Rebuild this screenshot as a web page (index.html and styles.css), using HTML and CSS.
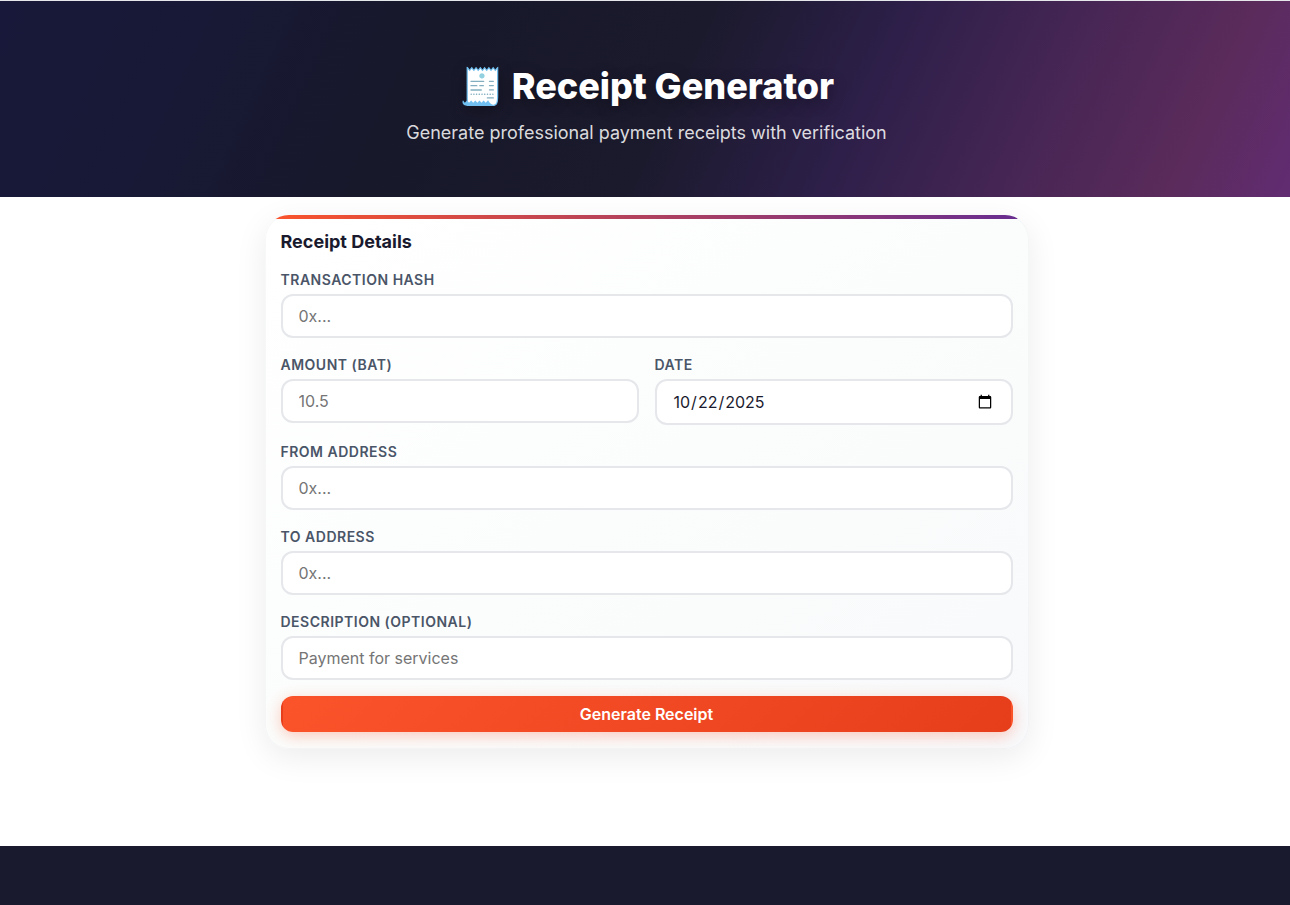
FILE: index.html
```html
<!DOCTYPE html>
<html lang="en">
<head>
<meta charset="utf-8">
<meta name="viewport" content="width=device-width, initial-scale=1">
<title>Receipt Generator</title>
<link rel="stylesheet" href="styles.css">
</head>
<body>
<header class="hero">
  <h1 class="hero-title">🧾 Receipt Generator</h1>
  <p class="hero-subtitle">Generate professional payment receipts with verification</p>
</header>
<main class="content">
  <form class="card">
    <h2 class="card-title">Receipt Details</h2>
    <div class="fields">
      <div class="field">
        <label class="label" for="hash">Transaction Hash</label>
        <input class="input" id="hash" type="text" placeholder="0x...">
      </div>
      <div class="row">
        <div class="field">
          <label class="label" for="amount">Amount (BAT)</label>
          <input class="input" id="amount" type="number" step="0.01" placeholder="10.5">
        </div>
        <div class="field">
          <label class="label" for="date">Date</label>
          <input class="input input-date" id="date" type="date" value="2025-10-22">
        </div>
      </div>
      <div class="field">
        <label class="label" for="from">From Address</label>
        <input class="input" id="from" type="text" placeholder="0x...">
      </div>
      <div class="field">
        <label class="label" for="to">To Address</label>
        <input class="input" id="to" type="text" placeholder="0x...">
      </div>
      <div class="field">
        <label class="label" for="description">Description (Optional)</label>
        <input class="input" id="description" type="text" placeholder="Payment for services">
      </div>
      <button class="button" type="button">Generate Receipt</button>
    </div>
  </form>
</main>
<footer class="footer"></footer>
</body>
</html>
```

FILE: styles.css
```css
* {
  box-sizing: border-box;
}

body {
  display: flex;
  flex-direction: column;
  min-height: 100vh;
  margin: 0;
  background: #fff;
  color: #1a1a2e;
  font-family: Inter, "Liberation Sans", sans-serif;
  font-size: 16px;
}

.hero {
  padding: 63px 16px 48px 19px;
  border-top: 1px solid #e5e7eb;
  background: linear-gradient(115deg, #18183a 0%, #181936 15%, #17182a 32%, #1b1a2d 52%, #2d1f49 66%, #482655 80%, #5a2b5b 91%, #622c72 100%);
  text-align: center;
}

.hero-title {
  margin: 0 0 9px;
  color: #fff;
  font-size: 36px;
  font-weight: 800;
  line-height: 44px;
  text-shadow: 0 4px 16px rgba(0, 0, 0, 0.3);
}

.hero-subtitle {
  margin: 0;
  color: rgba(255, 255, 255, 0.85);
  font-size: 18px;
  line-height: 32px;
}

.content {
  flex: 1;
  padding: 18px 16px 97px 19px;
}

.card {
  position: relative;
  max-width: 764px;
  margin: 0 auto;
  padding: 16px 16px 17px;
  overflow: hidden;
  border-radius: 24px;
  background: linear-gradient(145deg, #fff 0%, #fbfdfc 50%, #f8f9fb 100%);
  box-shadow:
    0 8px 32px rgba(0, 0, 0, 0.08),
    inset 0 0 0 1px rgba(229, 231, 235, 0.3);
}

.card::before {
  position: absolute;
  inset: 0 0 auto;
  height: 4px;
  background: linear-gradient(90deg, #fb542b, #662d91);
  content: "";
}

.card-title {
  margin: 0 0 17px;
  font-size: 18px;
  font-weight: 700;
  line-height: 21px;
}

.fields {
  display: flex;
  flex-direction: column;
  gap: 16px;
}

.row {
  display: grid;
  grid-template-columns: 1fr 1fr;
  align-items: start;
  gap: 16px;
}

.field {
  display: flex;
  flex-direction: column;
  gap: 4px;
}

.label {
  color: #4a5568;
  font-size: 14px;
  font-weight: 600;
  letter-spacing: 0.5px;
  line-height: 21px;
  text-transform: uppercase;
}

.input {
  width: 100%;
  height: 44px;
  padding: 0 16px;
  border: 2px solid #e5e7eb;
  border-radius: 12px;
  background: #fff;
  color: #1a1a2e;
  font: inherit;
}

.input::placeholder {
  color: #757575;
}

.input-date {
  height: 46px;
}

.button {
  height: 36px;
  border: 2px solid transparent;
  border-radius: 12px;
  background: linear-gradient(135deg, #fb542b, #e63e1b);
  box-shadow: 0 4px 16px rgba(251, 84, 43, 0.3);
  color: #fff;
  font: inherit;
  font-weight: 600;
}

.footer {
  height: 59px;
  background: #1a1a2e;
}
```
